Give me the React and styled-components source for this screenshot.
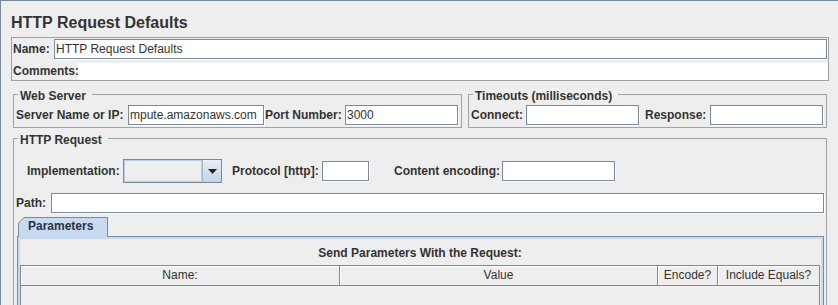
import React from 'react';
import styled, { createGlobalStyle } from 'styled-components';

const GlobalStyle = createGlobalStyle`
  html, body {
    margin: 0;
    padding: 0;
    background: #eeeeee;
  }
  body {
    font-family: "Liberation Sans", Arial, sans-serif;
    font-size: 12px;
    color: #333333;
  }
`;

const Frame = styled.div`
  box-sizing: border-box;
  height: 305px;
  overflow: hidden;
  border-top: 1px solid #7a8a99;
  border-left: 1px solid #7a8a99;
  background: #eeeeee;
`;

const Title = styled.div`
  padding: 12px 0 0 10px;
  font-size: 16px;
  font-weight: bold;
  line-height: 20px;
  color: #333333;
`;

const NamePanel = styled.div`
  margin: 4px 9px 0 10px;
  border: 1px solid #a0a0a0;
`;

const NameRow = styled.div`
  display: flex;
  align-items: center;
  padding: 1px 1px 0 1px;
`;

const CommentsRow = styled.div`
  display: flex;
  align-items: center;
  margin-top: 4px;
  padding-left: 1px;
  height: 17px;
`;

const CommentArea = styled.div`
  flex: 1;
  align-self: stretch;
  background: #ffffff;
`;

const Label = styled.span`
  flex-shrink: 0;
  width: ${(p) => (p.$w ? `${p.$w}px` : 'auto')};
  margin-left: ${(p) => p.$ml || 0}px;
  font-weight: bold;
  white-space: nowrap;
  line-height: ${(p) => p.$lh || 17}px;
`;

const Field = styled.div`
  box-sizing: border-box;
  flex: ${(p) => (p.$grow ? 1 : '0 0 auto')};
  width: ${(p) => (p.$w ? `${p.$w}px` : 'auto')};
  height: 20px;
  padding: 0 1px;
  border: 1px solid #7a8a99;
  box-shadow: 1px 1px 0 #ffffff;
  background: #ffffff;
  line-height: 18px;
  white-space: nowrap;
  overflow: hidden;
`;

const Body = styled.div`
  padding: 5px 11px 0 12px;
`;

const TopRow = styled.div`
  display: flex;
  gap: 6px;
`;

const Group = styled.fieldset`
  box-sizing: border-box;
  margin: ${(p) => p.$mt || 0}px 0 0 0;
  min-width: 0;
  width: ${(p) => (p.$w ? `${p.$w}px` : 'auto')};
  flex: ${(p) => (p.$w ? '0 0 auto' : 1)};
  padding: ${(p) => p.$pad};
  border: 1px solid #a3a3a3;

  legend {
    margin-left: 2px;
    padding: 3px 6px 0 2px;
    font-weight: bold;
    line-height: 14px;
    color: #333333;
  }
`;

const Row = styled.div`
  display: flex;
  align-items: center;
  height: ${(p) => p.$h || 20}px;
  margin-top: ${(p) => p.$mt || 0}px;
`;

const Combo = styled.div`
  box-sizing: border-box;
  display: flex;
  width: 99px;
  height: 24px;
  flex-shrink: 0;
  border: 1px solid #7a8a99;
  background: #eeeeee;
`;

const ComboValue = styled.div`
  flex: 1;
  box-shadow: inset 1px 1px 0 #b8cfe5, inset -1px -1px 0 #b8cfe5;
`;

const ComboArrow = styled.div`
  display: flex;
  align-items: center;
  justify-content: center;
  width: 18px;
  border-left: 1px solid #a3b8cc;
  background: linear-gradient(#e6eef8, #c0d4ea);
`;

const Tabs = styled.div`
  margin: 4px 0 0 1px;
`;

const TabStrip = styled.div`
  display: flex;
  padding-left: 1px;
`;

const Tab = styled.div`
  position: relative;
  z-index: 1;
  width: 90px;
  height: 20px;
  margin-bottom: -1px;
  background: #7a8a99;
  clip-path: polygon(6px 0, 100% 0, 100% 100%, 0 100%, 0 6px);
`;

const TabFace = styled.div`
  height: 19px;
  margin: 1px 1px 0 1px;
  padding-left: 9px;
  background: #c8daf2;
  clip-path: polygon(5px 0, 100% 0, 100% 100%, 0 100%, 0 5px);
  font-weight: bold;
  line-height: 17px;
  color: #2c3244;
`;

const TabBody = styled.div`
  height: 120px;
  padding: 8px 3px 0 2px;
  border: 1px solid #7a8a99;
  box-shadow: inset 0 0 0 2px #c8daf2;
`;

const Caption = styled.div`
  text-align: center;
  font-weight: bold;
  line-height: 17px;
`;

const ScrollPane = styled.div`
  margin-top: 3px;
  height: 80px;
  border: 1px solid #7a8a99;
  border-bottom: none;
  background: #eeeeee;
`;

const HeaderRow = styled.div`
  display: flex;
  border-bottom: 1px solid #7a8a99;
`;

const HeaderCell = styled.div`
  box-sizing: border-box;
  flex: ${(p) => (p.$w ? `0 0 ${p.$w}px` : 1)};
  height: 19px;
  border-right: ${(p) => (p.$last ? 'none' : '1px solid #7a8a99')};
  box-shadow: inset 1px 1px 0 #ffffff;
  text-align: center;
  line-height: 19px;
  white-space: nowrap;
  overflow: hidden;
`;

const columns = [
  { title: 'Name:', w: 319 },
  { title: 'Value', w: 318 },
  { title: 'Encode?', w: 60 },
  { title: 'Include Equals?' },
];

const DownArrow = () => (
  <svg width="9" height="5" viewBox="0 0 9 5">
    <polygon points="0,0 9,0 4.5,5" fill="#222" />
  </svg>
);

export default function App() {
  return (
    <>
      <GlobalStyle />
      <Frame>
        <Title>HTTP Request Defaults</Title>
        <NamePanel>
          <NameRow>
            <Label $w={41} $lh={20}>Name:</Label>
            <Field $grow>HTTP Request Defaults</Field>
          </NameRow>
          <CommentsRow>
            <Label $w={65}>Comments:</Label>
            <CommentArea />
          </CommentsRow>
        </NamePanel>

        <Body>
          <TopRow>
            <Group $w={449} $pad="2px 2px 2px 2px">
              <legend>Web Server</legend>
              <Row>
                <Label $w={112}>Server Name or IP:</Label>
                <Field $w={136}>mpute.amazonaws.com</Field>
                <Label $w={80} $ml={1}>Port Number:</Label>
                <Field $w={113}>3000</Field>
              </Row>
            </Group>
            <Group $pad="2px 2px 2px 2px">
              <legend>Timeouts (milliseconds)</legend>
              <Row>
                <Label $w={55}>Connect:</Label>
                <Field $w={113} />
                <Label $w={65} $ml={6}>Response:</Label>
                <Field $w={113} />
              </Row>
            </Group>
          </TopRow>

          <Group $mt={2} $pad="0 2px 0 2px">
            <legend>HTTP Request</legend>
            <Row $h={24} $mt={12}>
              <Label $w={96} $ml={11}>Implementation:</Label>
              <Combo>
                <ComboValue />
                <ComboArrow>
                  <DownArrow />
                </ComboArrow>
              </Combo>
              <Label $w={90} $ml={10}>Protocol [http]:</Label>
              <Field $w={47} />
              <Label $w={108} $ml={25}>Content encoding:</Label>
              <Field $w={113} />
            </Row>
            <Row $mt={10}>
              <Label $w={35}>Path:</Label>
              <Field $grow />
            </Row>
            <Tabs>
              <TabStrip>
                <Tab>
                  <TabFace>Parameters</TabFace>
                </Tab>
              </TabStrip>
              <TabBody>
                <Caption>Send Parameters With the Request:</Caption>
                <ScrollPane>
                  <HeaderRow>
                    {columns.map((c, i) => (
                      <HeaderCell key={c.title} $w={c.w} $last={i === columns.length - 1}>
                        {c.title}
                      </HeaderCell>
                    ))}
                  </HeaderRow>
                </ScrollPane>
              </TabBody>
            </Tabs>
          </Group>
        </Body>
      </Frame>
    </>
  );
}
